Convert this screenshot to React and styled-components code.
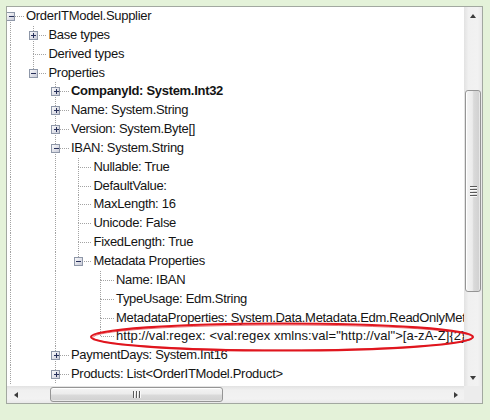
import React from 'react';
import styled, { createGlobalStyle } from 'styled-components';

const ROW_H = 18.85;
const INDENT = 22.5;
const OWN_W = 19;
const LINE = '#a3a3a3';

const GlobalStyle = createGlobalStyle`
    html, body {
        margin: 0;
        padding: 0;
        background: #e4f2d9;
    }
    body {
        font-family: "Liberation Sans", Arial, sans-serif;
    }
`;

const Page = styled.div`
    position: relative;
    width: 490px;
    height: 420px;
    box-sizing: border-box;
    padding: 6px 0 0 6px;
    background: #e4f2d9;
`;

const Frame = styled.div`
    width: 477px;
    height: 398px;
    box-sizing: border-box;
    border: 1px solid #a2a8a0;
    background: #fff;
    display: grid;
    grid-template-columns: 1fr 18px;
    grid-template-rows: 1fr 17px;
    overflow: hidden;
`;

const TreeArea = styled.div`
    overflow: hidden;
    display: flex;
    flex-direction: column;
`;

const Row = styled.div`
    display: flex;
    align-items: center;
    height: ${ROW_H}px;
    flex: none;
    white-space: nowrap;
`;

const Guides = styled.svg`
    flex: none;
    display: block;
`;

const Label = styled.span`
    font-size: 13px;
    letter-spacing: ${p => (p.$loose ? '0.05px' : '-0.3px')};
    color: #141414;
    font-weight: ${p => (p.$bold ? 700 : 400)};
    line-height: ${ROW_H}px;
`;

const VScroll = styled.div`
    display: flex;
    flex-direction: column;
    background: linear-gradient(to right, #e2e2e2 0%, #f0f0f0 25%, #f2f2f2 75%, #e9e9e9 100%);
`;

const HScroll = styled.div`
    display: flex;
    flex-direction: row;
    background: linear-gradient(to bottom, #e2e2e2 0%, #f0f0f0 25%, #f2f2f2 75%, #e9e9e9 100%);
`;

const Corner = styled.div`
    background: #ececec;
`;

const ArrowButton = styled.div`
    flex: none;
    width: ${p => (p.$vertical ? '100%' : '17px')};
    height: ${p => (p.$vertical ? '17px' : '100%')};
    display: flex;
    align-items: center;
    justify-content: center;
`;

const Triangle = styled.div`
    width: 0;
    height: 0;
    ${p => p.$dir === 'up' && `
        border-left: 3.5px solid transparent;
        border-right: 3.5px solid transparent;
        border-bottom: 4px solid #3c3c3c;
    `}
    ${p => p.$dir === 'down' && `
        border-left: 3.5px solid transparent;
        border-right: 3.5px solid transparent;
        border-top: 4px solid #3c3c3c;
    `}
    ${p => p.$dir === 'left' && `
        border-top: 3.5px solid transparent;
        border-bottom: 3.5px solid transparent;
        border-right: 4px solid #3c3c3c;
    `}
    ${p => p.$dir === 'right' && `
        border-top: 3.5px solid transparent;
        border-bottom: 3.5px solid transparent;
        border-left: 4px solid #3c3c3c;
    `}
`;

const Spacer = styled.div`
    flex: ${p => (p.$size ? `0 0 ${p.$size}px` : '1 1 auto')};
`;

const Thumb = styled.div`
    flex: none;
    box-sizing: border-box;
    border: 1px solid #959595;
    border-radius: 3px;
    display: flex;
    align-items: center;
    justify-content: center;
    ${p => p.$vertical ? `
        height: ${p.$size}px;
        margin: 0 1px;
        background: linear-gradient(to right, #f4f4f4 0%, #ececec 45%, #dadada 55%, #d0d0d0 100%);
        box-shadow: inset 1px 0 0 #fff, inset -1px 0 0 #e8e8e8;
    ` : `
        width: ${p.$size}px;
        margin: 1px 0;
        background: linear-gradient(to bottom, #f4f4f4 0%, #ececec 45%, #dadada 55%, #d0d0d0 100%);
        box-shadow: inset 0 1px 0 #fff, inset 0 -1px 0 #e8e8e8;
    `}
`;

const Grip = styled.div`
    display: flex;
    flex-direction: ${p => (p.$vertical ? 'column' : 'row')};
    gap: 1px;
`;

const GripLine = styled.div`
    ${p => p.$vertical ? `
        width: 7px;
        height: 1px;
        border-bottom: 1px solid #fafafa;
    ` : `
        width: 1px;
        height: 7px;
        border-right: 1px solid #fafafa;
    `}
    background: #5a5a5a;
`;

const Annotation = styled.svg`
    position: absolute;
    left: 87px;
    top: 321px;
    pointer-events: none;
`;

const nodes = [
    { level: 0, text: 'OrderITModel.Supplier', exp: 'minus', first: true },
    { level: 1, text: 'Base types', exp: 'plus' },
    { level: 1, text: 'Derived types' },
    { level: 1, text: 'Properties', exp: 'minus', last: true },
    { level: 2, text: 'CompanyId: System.Int32', exp: 'plus', bold: true },
    { level: 2, text: 'Name: System.String', exp: 'plus' },
    { level: 2, text: 'Version: System.Byte[]', exp: 'plus' },
    { level: 2, text: 'IBAN: System.String', exp: 'minus' },
    { level: 3, text: 'Nullable: True' },
    { level: 3, text: 'DefaultValue:' },
    { level: 3, text: 'MaxLength: 16' },
    { level: 3, text: 'Unicode: False' },
    { level: 3, text: 'FixedLength: True' },
    { level: 3, text: 'Metadata Properties', exp: 'minus', last: true },
    { level: 4, text: 'Name: IBAN' },
    { level: 4, text: 'TypeUsage: Edm.String' },
    { level: 4, text: 'MetadataProperties: System.Data.Metadata.Edm.ReadOnlyMetadataCollection`1[System.Data.Metadata.Edm.MetadataProperty]' },
    { level: 4, text: 'http://val:regex: <val:regex xmlns:val="http://val">[a-zA-Z]{2}[0-9]{2}[a-zA-Z0-9]{4}[0-9]{7}([a-zA-Z0-9]?){0,16}</val:regex>', last: true, loose: true },
    { level: 2, text: 'PaymentDays: System.Int16', exp: 'plus' },
    { level: 2, text: 'Products: List<OrderITModel.Product>', exp: 'plus' },
];

// which ancestor columns carry a continuing line for each row
const withGuides = () => {
    const open = [];
    return nodes.map(n => {
        const cols = open.slice(0, n.level);
        open[n.level] = !n.last;
        open.length = n.level + 1;
        return { ...n, cols };
    });
};

const lineX = c => 3.5 + INDENT * c;

const TreeGuides = ({ node }) => {
    const width = INDENT * node.level + OWN_W;
    const mid = ROW_H / 2;
    const x = lineX(node.level);
    const cy = Math.round(mid);
    return (
        <Guides width={width} height={ROW_H} shapeRendering="crispEdges">
            <g stroke={LINE} strokeWidth="1" strokeDasharray="1 1">
                {node.cols.map((on, c) => on && (
                    <line key={c} x1={lineX(c)} y1="0" x2={lineX(c)} y2={ROW_H} />
                ))}
                {!node.first && <line x1={x} y1="0" x2={x} y2={mid} />}
                {!node.last && <line x1={x} y1={mid} x2={x} y2={ROW_H} />}
                <line x1={x} y1={cy + 0.5} x2={width - 2} y2={cy + 0.5} />
            </g>
            {node.exp && (
                <g>
                    <rect x={x - 4} y={cy - 4} width="8" height="8" fill="url(#boxfill)" stroke="#8e97a8" strokeWidth="1" />
                    <line x1={x - 2} y1={cy + 0.5} x2={x + 3} y2={cy + 0.5} stroke="#27305a" strokeWidth="1" />
                    {node.exp === 'plus' && (
                        <line x1={x + 0.5} y1={cy - 2} x2={x + 0.5} y2={cy + 3} stroke="#27305a" strokeWidth="1" />
                    )}
                </g>
            )}
        </Guides>
    );
};

const GradientDefs = () => (
    <svg width="0" height="0" style={{ position: 'absolute' }}>
        <defs>
            <linearGradient id="boxfill" x1="0" y1="0" x2="1" y2="1">
                <stop offset="0" stopColor="#ffffff" />
                <stop offset="1" stopColor="#c9cbd8" />
            </linearGradient>
        </defs>
    </svg>
);

export default function App() {
    const rows = withGuides();
    return (
        <Page>
            <GlobalStyle />
            <GradientDefs />
            <Frame>
                <TreeArea>
                    {rows.map((n, i) => (
                        <Row key={i}>
                            <TreeGuides node={n} />
                            <Label $bold={n.bold} $loose={n.loose}>{n.text}</Label>
                        </Row>
                    ))}
                </TreeArea>
                <VScroll>
                    <ArrowButton $vertical><Triangle $dir="up" /></ArrowButton>
                    <Spacer $size={66} />
                    <Thumb $vertical $size={202}>
                        <Grip $vertical>
                            <GripLine $vertical /><GripLine $vertical /><GripLine $vertical /><GripLine $vertical />
                        </Grip>
                    </Thumb>
                    <Spacer />
                    <ArrowButton $vertical><Triangle $dir="down" /></ArrowButton>
                </VScroll>
                <HScroll>
                    <ArrowButton><Triangle $dir="left" /></ArrowButton>
                    <Spacer $size={26} />
                    <Thumb $size={173}>
                        <Grip>
                            <GripLine /><GripLine /><GripLine />
                        </Grip>
                    </Thumb>
                    <Spacer />
                    <ArrowButton><Triangle $dir="right" /></ArrowButton>
                </HScroll>
                <Corner />
            </Frame>
            <Annotation width="390" height="32" viewBox="0 0 390 32">
                <ellipse cx="195" cy="16" rx="191" ry="13.5" fill="none" stroke="#e0161e" strokeWidth="2.2" />
                <ellipse cx="196" cy="16.5" rx="190" ry="12.5" fill="none" stroke="#e0161e" strokeWidth="1" opacity="0.6" />
            </Annotation>
        </Page>
    );
}
